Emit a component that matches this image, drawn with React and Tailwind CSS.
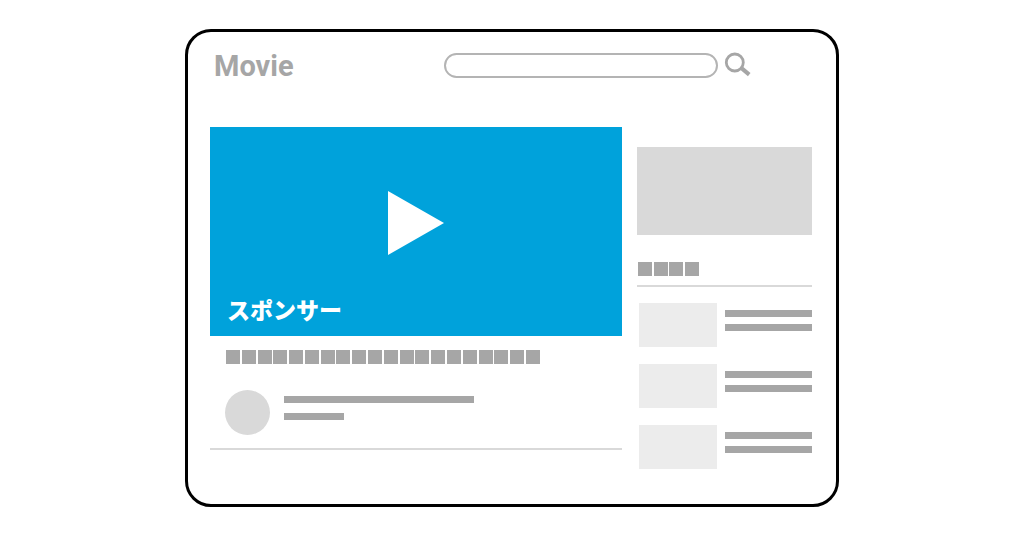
import React from 'react';
import clsx from 'clsx';

const related = [1, 2, 3];

function Bar({ className }) {
  return <div className={clsx('h-[7px] bg-[#a6a6a6]', className)} />;
}

function Blocks({ count, className }) {
  return (
    <div className={clsx('flex justify-between', className)}>
      {Array.from({ length: count }, (_, i) => (
        <span key={i} className="w-3.5 h-3.5 bg-[#a6a6a6]" />
      ))}
    </div>
  );
}

function Header() {
  return (
    <header className="flex items-center h-[25px] pl-1">
      <h1 className="flex-1 pt-0.5 font-['Roboto'] font-bold text-[29px] leading-[25px] text-[#a6a6a6]">Movie</h1>
      <form className="flex items-center gap-[7px] mr-[61px]" onSubmit={(e) => e.preventDefault()}>
        <input
          type="text"
          aria-label="Search"
          className="w-[274px] h-[25px] px-3 rounded-full border-2 border-[#b4b4b4] bg-white text-sm outline-none"
        />
        <button type="submit" aria-label="Search" className="w-[26px] h-[25px]">
          <svg viewBox="0 0 26 25" className="w-[26px] h-[25px] overflow-visible" fill="none" stroke="#a6a6a6">
            <circle cx="9.8" cy="9.5" r="8.5" strokeWidth="2.8" />
            <path d="M15.6 14.4l8.6 7.2" strokeWidth="4" />
          </svg>
        </button>
      </form>
    </header>
  );
}

function Player() {
  return (
    <section className="flex flex-col h-[209px] pt-16 bg-[#00a2db]">
      <button type="button" aria-label="Play" className="self-center w-14 h-16">
        <svg viewBox="0 0 56 64" className="w-14 h-16" fill="#fff">
          <path d="M0 0l56 32L0 64z" />
        </svg>
      </button>
      <p className="mt-auto mb-3 pl-[17px] font-['Noto_Sans_CJK_JP',sans-serif] font-black text-[23px] leading-[30px] text-white">
        スポンサー
      </p>
    </section>
  );
}

function Sidebar() {
  return (
    <aside className="pt-5">
      <div className="h-[88px] bg-[#d9d9d9]" />
      <div className="pt-[27px] pb-[9px] pl-px border-b-2 border-[#d9d9d9]">
        <Blocks count={4} className="w-[61px]" />
      </div>
      <ul className="flex flex-col gap-[17px] mt-4 pl-0.5">
        {related.map((id) => (
          <li key={id} className="flex gap-2">
            <div className="w-[78px] h-11 bg-[#ececec]" />
            <div className="flex flex-1 flex-col gap-[7px] pt-[7px]">
              <Bar />
              <Bar />
            </div>
          </li>
        ))}
      </ul>
    </aside>
  );
}

export default function App() {
  return (
    <div className="bg-white py-[29px]">
      <div className="w-full max-w-[654px] mx-auto pt-[21px] pb-[35px] pl-[22px] pr-6 rounded-[26px] border-3 border-black">
        <Header />
        <div className="grid grid-cols-[412fr_175fr] gap-[15px] mt-[49px]">
          <main>
            <Player />
            <Blocks count={20} className="w-[314px] mt-3.5 ml-4" />
            <div className="flex gap-3.5 mt-[26px] pl-[15px] pb-[13px] border-b-2 border-[#d9d9d9]">
              <div className="w-[45px] h-[45px] rounded-full bg-[#d9d9d9]" />
              <div className="flex flex-col gap-2.5 pt-1.5">
                <Bar className="w-[190px]" />
                <Bar className="w-[60px]" />
              </div>
            </div>
          </main>
          <Sidebar />
        </div>
      </div>
    </div>
  );
}
